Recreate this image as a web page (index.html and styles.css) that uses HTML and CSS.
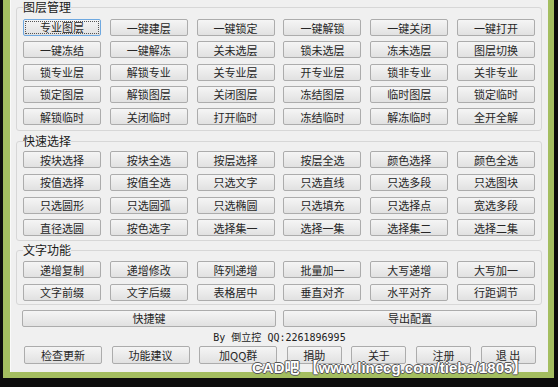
FILE: index.html
```html
<!DOCTYPE html>
<html lang="zh-CN">

<head>
    <meta charset="UTF-8">
    <title>图层工具</title>
    <link rel="stylesheet" href="styles.css">
</head>

<body>
    <div class="frame">
        <div class="panel">

            <fieldset class="group g1">
                <legend>图层管理</legend>
                <div class="btns">
                    <button class="btn focus"><span>专业图层</span></button>
                    <button class="btn">一键建层</button>
                    <button class="btn">一键锁定</button>
                    <button class="btn">一键解锁</button>
                    <button class="btn">一键关闭</button>
                    <button class="btn">一键打开</button>
                    <button class="btn">一键冻结</button>
                    <button class="btn">一键解冻</button>
                    <button class="btn">关未选层</button>
                    <button class="btn">锁未选层</button>
                    <button class="btn">冻未选层</button>
                    <button class="btn">图层切换</button>
                    <button class="btn">锁专业层</button>
                    <button class="btn">解锁专业</button>
                    <button class="btn">关专业层</button>
                    <button class="btn">开专业层</button>
                    <button class="btn">锁非专业</button>
                    <button class="btn">关非专业</button>
                    <button class="btn">锁定图层</button>
                    <button class="btn">解锁图层</button>
                    <button class="btn">关闭图层</button>
                    <button class="btn">冻结图层</button>
                    <button class="btn">临时图层</button>
                    <button class="btn">锁定临时</button>
                    <button class="btn">解锁临时</button>
                    <button class="btn">关闭临时</button>
                    <button class="btn">打开临时</button>
                    <button class="btn">冻结临时</button>
                    <button class="btn">解冻临时</button>
                    <button class="btn">全开全解</button>
                </div>
            </fieldset>

            <fieldset class="group g2">
                <legend>快速选择</legend>
                <div class="btns">
                    <button class="btn">按块选择</button>
                    <button class="btn">按块全选</button>
                    <button class="btn">按层选择</button>
                    <button class="btn">按层全选</button>
                    <button class="btn">颜色选择</button>
                    <button class="btn">颜色全选</button>
                    <button class="btn">按值选择</button>
                    <button class="btn">按值全选</button>
                    <button class="btn">只选文字</button>
                    <button class="btn">只选直线</button>
                    <button class="btn">只选多段</button>
                    <button class="btn">只选图块</button>
                    <button class="btn">只选圆形</button>
                    <button class="btn">只选圆弧</button>
                    <button class="btn">只选椭圆</button>
                    <button class="btn">只选填充</button>
                    <button class="btn">只选择点</button>
                    <button class="btn">宽选多段</button>
                    <button class="btn">直径选圆</button>
                    <button class="btn">按色选字</button>
                    <button class="btn">选择集一</button>
                    <button class="btn">选择一集</button>
                    <button class="btn">选择集二</button>
                    <button class="btn">选择二集</button>
                </div>
            </fieldset>

            <fieldset class="group g3">
                <legend>文字功能</legend>
                <div class="btns">
                    <button class="btn">递增复制</button>
                    <button class="btn">递增修改</button>
                    <button class="btn">阵列递增</button>
                    <button class="btn">批量加一</button>
                    <button class="btn">大写递增</button>
                    <button class="btn">大写加一</button>
                    <button class="btn">文字前缀</button>
                    <button class="btn">文字后缀</button>
                    <button class="btn">表格居中</button>
                    <button class="btn">垂直对齐</button>
                    <button class="btn">水平对齐</button>
                    <button class="btn">行距调节</button>
                </div>
            </fieldset>

            <div class="wide_row">
                <button class="btn">快捷键</button>
                <button class="btn">导出配置</button>
            </div>

            <p class="credit">By 倒立控 QQ:2261896995</p>

            <div class="bottom_row">
                <button class="btn big">检查更新</button>
                <button class="btn big">功能建议</button>
                <button class="btn big">加QQ群</button>
                <button class="btn small">捐助</button>
                <button class="btn small">关于</button>
                <button class="btn small">注册</button>
                <button class="btn small">退 出</button>
            </div>

        </div>
    </div>

    <div class="watermark">CAD吧 【www.linecg.com/tieba/1805】</div>
</body>

</html>
```

FILE: styles.css
```css
* {
    margin: 0;
    padding: 0;
    box-sizing: border-box;
}

body {
    width: 558px;
    height: 387px;
    overflow: hidden;
    position: relative;
    background-color: #0d0d0d;
    font-family: "Noto Sans CJK SC", sans-serif;
    color: #1e1e1e;
}

/* --------------------- Janela --------------------- */

.frame {
    margin-left: 3px;
    width: 551px;
    height: 378px;
    padding: 0 6px 6px 7px;
    background-color: #a4be60;
}

.panel {
    height: 372px;
    display: flex;
    flex-direction: column;
    background-color: #f0f0f0;
    border-left: 1px solid #fafafa;
}

/* --------------------- Grupos --------------------- */

.group {
    margin: 0 6px 0 5px;
    padding: 5px 6px 5px 6px;
    border: 1px solid #d7d7d7;
    border-radius: 3px;
    min-width: 0;
}

.group legend {
    padding: 0;
    font-size: 12px;
    line-height: 14px;
    color: #1a1a1a;
}

.g2 {
    margin-top: 3px;
    padding-top: 3px;
    padding-bottom: 4px;
}

.g3 {
    margin-top: 2px;
    padding-top: 4px;
    padding-bottom: 3px;
}

.btns {
    display: grid;
    grid-template-columns: repeat(6, 1fr);
    column-gap: 8.8px;
    row-gap: 5.3px;
}

.g2 .btns {
    row-gap: 5.7px;
}

/* --------------------- Botões --------------------- */

.btn {
    height: 17px;
    border: 1px solid #acacac;
    border-radius: 2px;
    background: linear-gradient(#f5f5f5, #e1e1e1);
    font-family: "Noto Sans CJK SC", sans-serif;
    font-size: 11px;
    line-height: 14px;
    color: #262626;
    white-space: nowrap;
}

.focus {
    border-color: #6ea8e0;
    padding: 1px;
}

.focus span {
    display: block;
    height: 13px;
    line-height: 12px;
    outline: 1px dotted #555;
    outline-offset: -1px;
}

.wide_row {
    margin-top: 5px;
    padding: 0 11px;
    display: grid;
    grid-template-columns: 1fr 1fr;
    column-gap: 7px;
}

.credit {
    margin-top: 4px;
    text-align: center;
    font-family: "DejaVu Sans Mono", "Noto Sans CJK SC", monospace;
    font-size: 10px;
    line-height: 14px;
    color: #222;
}

.bottom_row {
    margin-top: 1px;
    padding-left: 13px;
    display: flex;
    column-gap: 9.6px;
}

.bottom_row .btn {
    height: 18px;
}

.big {
    width: 78px;
}

.small {
    width: 55px;
}

/* --------------------- Marca d'água --------------------- */

.watermark {
    position: absolute;
    left: 252px;
    top: 358px;
    font-family: "Liberation Sans", "Noto Sans CJK SC", sans-serif;
    font-weight: bold;
    font-size: 15px;
    line-height: 20px;
    color: #fff;
    white-space: nowrap;
    text-shadow: 1px 0 0 #555, -1px 0 0 #555, 0 1px 0 #555, 0 -1px 0 #555;
}
```
